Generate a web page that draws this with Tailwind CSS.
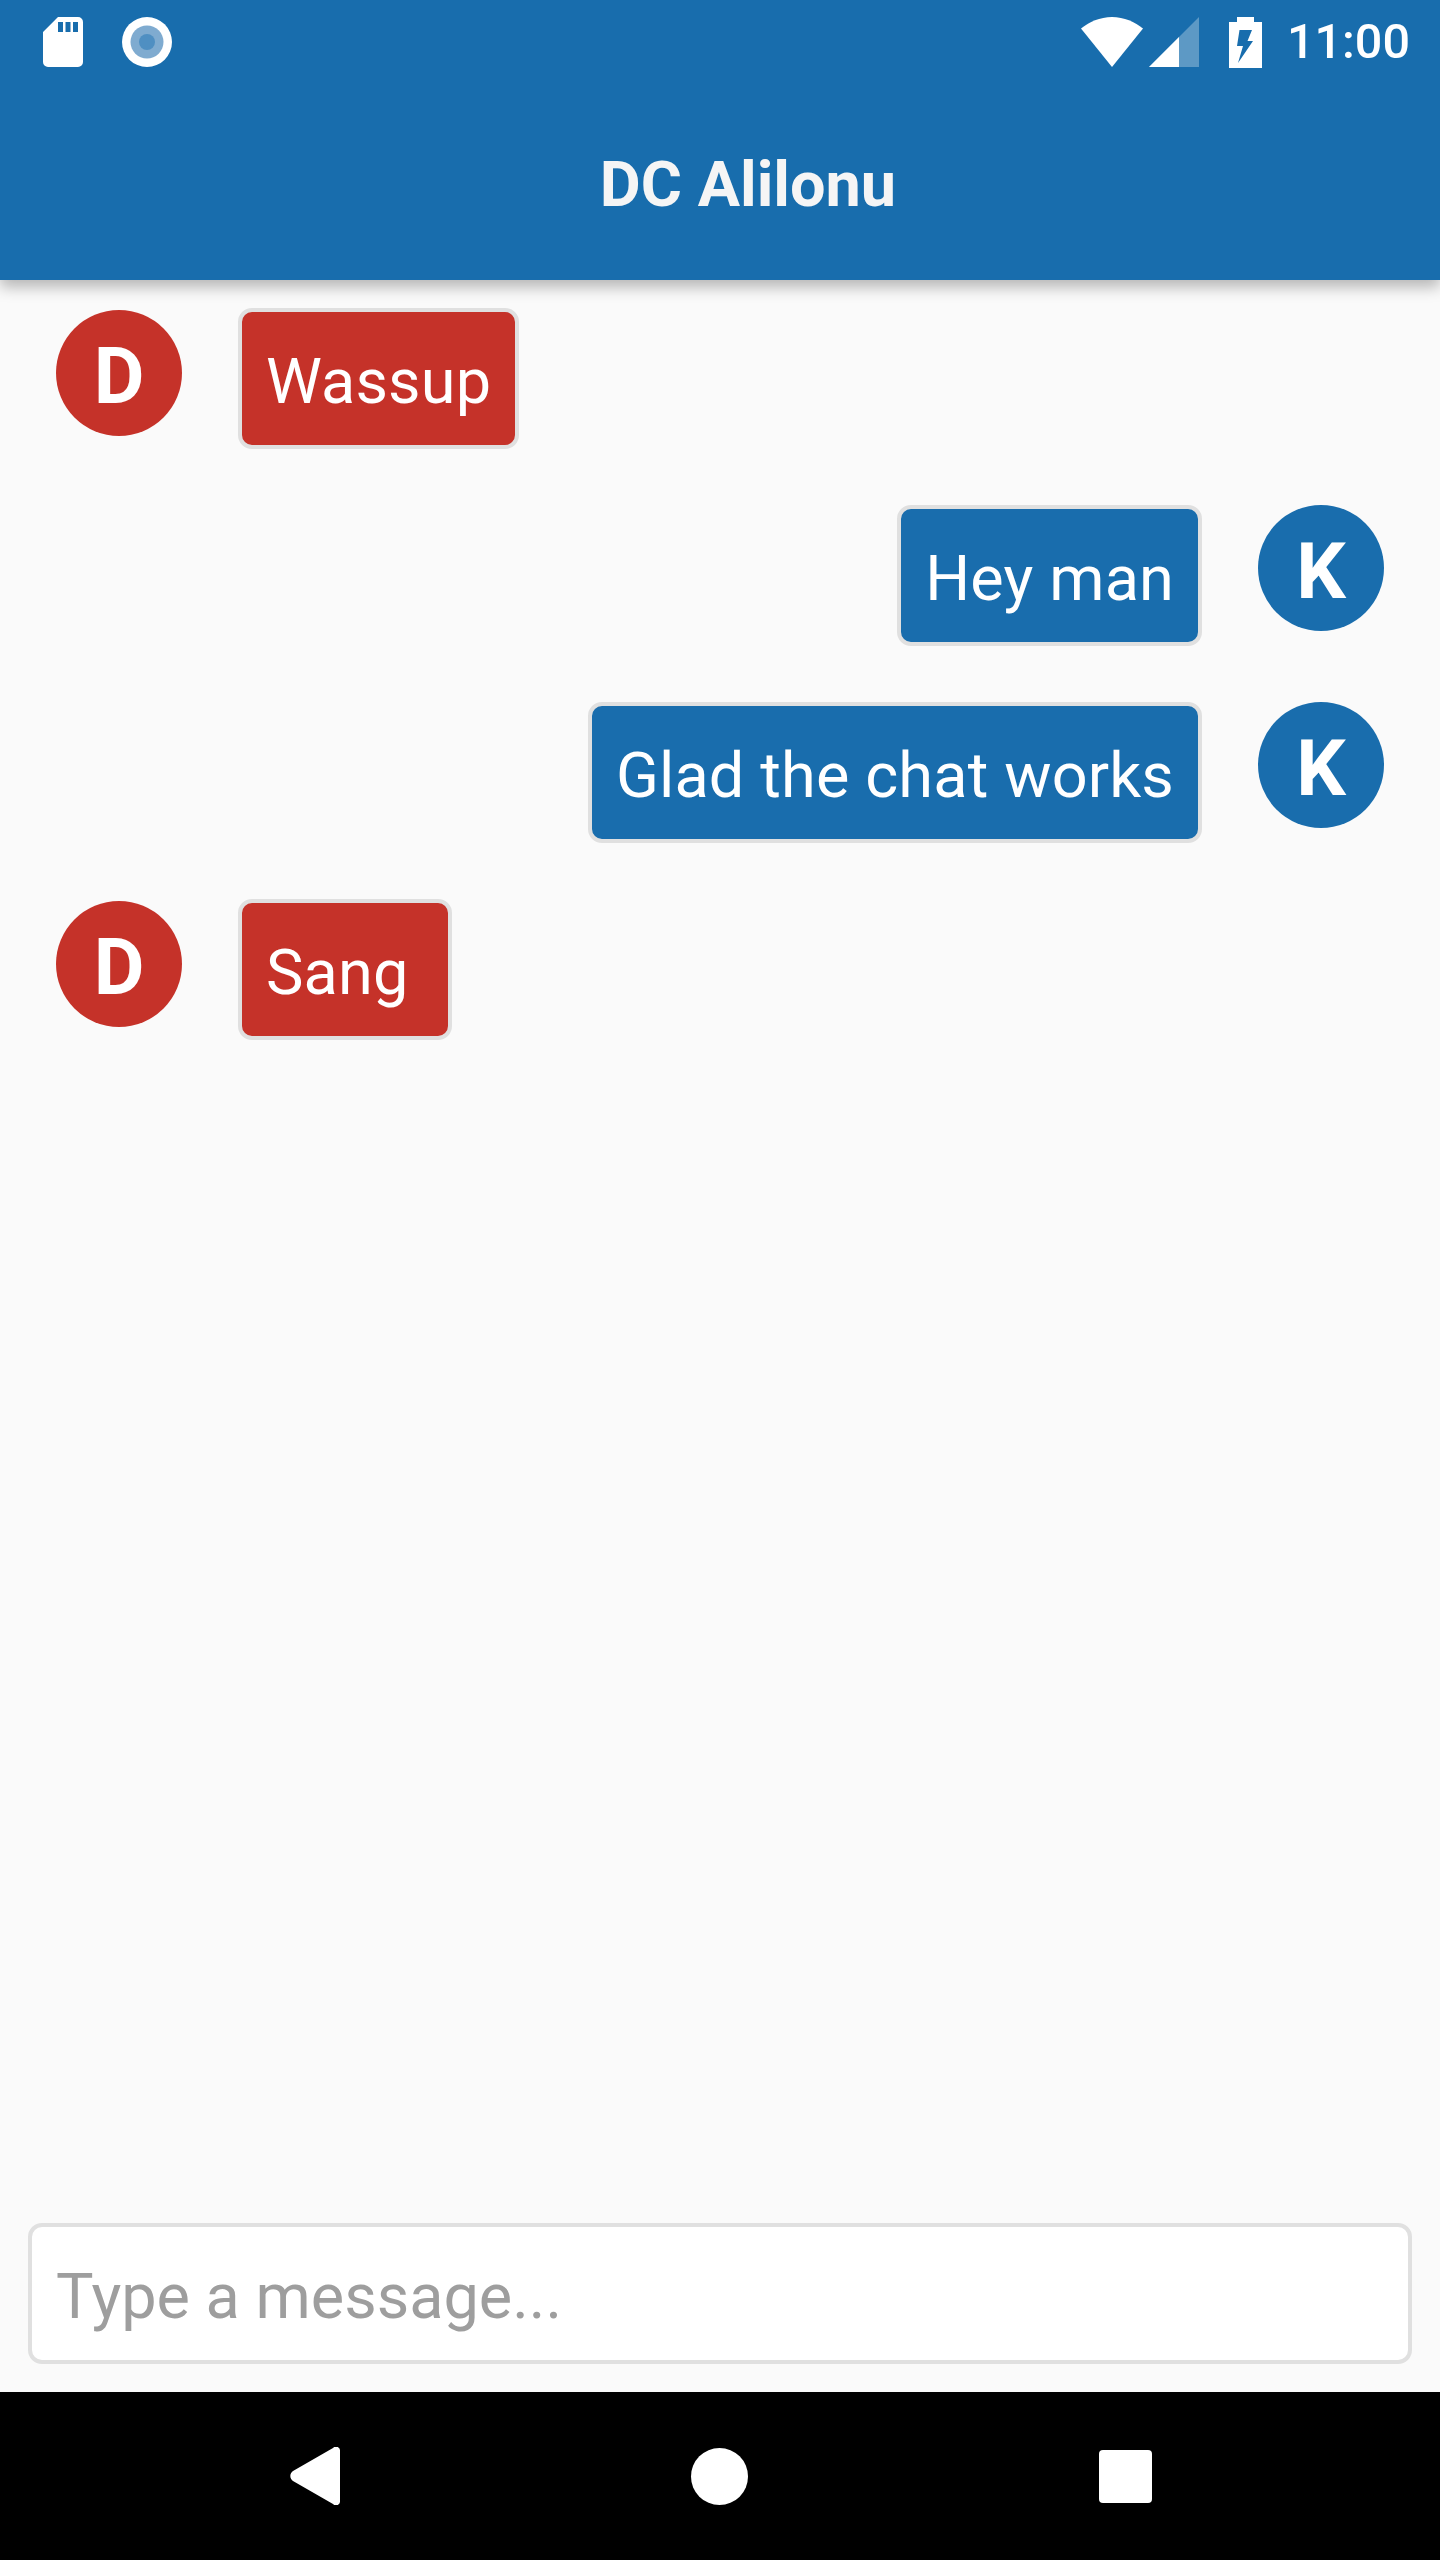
<!DOCTYPE html>
<html lang="en">
<head>
    <meta charset="UTF-8">
    <title>DC Alilonu</title>
    <script src="https://cdn.jsdelivr.net/npm/@tailwindcss/browser@4"></script>
</head>
<body class="bg-[#fafafa] font-['Roboto',sans-serif]">
    <div class="flex flex-col w-[1440px] h-[2560px]">
        <!-- header -->
        <header class="relative z-10 h-[280px] bg-[#186dad] text-white shadow-[0_7px_14px_rgba(0,0,0,0.28)]">
            <div class="flex items-center h-[84px] pl-[43px] pr-[30px]">
                <svg class="w-[40px] h-[50px]" viewBox="0 0 40 50"><path fill="#fff" fill-rule="evenodd" d="M15 0H35a5 5 0 0 1 5 5V45a5 5 0 0 1-5 5H5a5 5 0 0 1-5-5V15ZM15 5v10h5V5ZM22.500 5v10h5V5ZM30 5v10h5V5Z"/></svg>
                <svg class="w-[50px] h-[50px] ml-[39px]" viewBox="0 0 50 50"><circle cx="25" cy="25" r="25" fill="#fff"/><circle cx="25" cy="25" r="16.500" fill="#7fabd0"/><circle cx="25" cy="25" r="8" fill="#4f8fc2"/></svg>
                <svg class="w-[62px] h-[50px] ml-auto" viewBox="0 0 62 50"><path fill="#fff" d="M31 50 0 11.500C8 5 19 0 31 0S54 5 62 11.500Z"/></svg>
                <svg class="w-[50px] h-[50px] ml-[6px]" viewBox="0 0 50 50"><path fill="#fff" fill-opacity="0.3" d="M50 0V50H0Z"/><path fill="#fff" d="M30 20V50H0Z"/></svg>
                <svg class="w-[33px] h-[51px] ml-[30px]" viewBox="0 0 33 51"><path fill="#fff" fill-rule="evenodd" d="M8 0H25V5H33V51H0V5H8ZM10.500 13 8 29H14L9 46 24 24H18.500L23 13Z"/></svg>
                <span class="ml-[25px] text-[48.5px] leading-none font-medium">11:00</span>
            </div>
            <div class="flex justify-center items-center h-[196px] pl-[56px] pt-[4px]">
                <h1 class="text-[63px] font-bold leading-none text-[#f5f5f5]">DC Alilonu</h1>
            </div>
        </header>

        <!-- messages -->
        <main class="flex-1 flex flex-col gap-[56px] pt-[28px] px-[56px]">
            <div class="flex items-start gap-[56px]">
                <div class="flex items-center justify-center shrink-0 w-[126px] h-[126px] mt-[2px] pt-[6px] rounded-full bg-[#c53229] text-white text-[78px] font-bold">D</div>
                <div class="px-[24px] pt-[31px] pb-[25px] border-4 border-[#e0e0e0] rounded-[14px] bg-[#c53229] text-white text-[63px] leading-[77px] tracking-[0.15px]">Wassup</div>
            </div>
            <div class="flex items-start justify-end gap-[56px]">
                <div class="px-[24px] pt-[31px] pb-[25px] border-4 border-[#e0e0e0] rounded-[14px] bg-[#196dad] text-white text-[63px] leading-[77px] tracking-[0.15px]">Hey man</div>
                <div class="flex items-center justify-center shrink-0 w-[126px] h-[126px] pt-[6px] rounded-full bg-[#196dad] text-white text-[78px] font-bold">K</div>
            </div>
            <div class="flex items-start justify-end gap-[56px]">
                <div class="px-[24px] pt-[31px] pb-[25px] border-4 border-[#e0e0e0] rounded-[14px] bg-[#196dad] text-white text-[63px] leading-[77px] tracking-[0.15px]">Glad the chat works</div>
                <div class="flex items-center justify-center shrink-0 w-[126px] h-[126px] pt-[6px] rounded-full bg-[#196dad] text-white text-[78px] font-bold">K</div>
            </div>
            <div class="flex items-start gap-[56px]">
                <div class="flex items-center justify-center shrink-0 w-[126px] h-[126px] mt-[2px] pt-[6px] rounded-full bg-[#c53229] text-white text-[78px] font-bold">D</div>
                <div class="px-[24px] pt-[31px] pb-[25px] border-4 border-[#e0e0e0] rounded-[14px] bg-[#c53229] text-white text-[63px] leading-[77px] tracking-[0.15px] whitespace-pre">Sang </div>
            </div>
        </main>

        <!-- input -->
        <div class="px-[28px] pb-[28px]">
            <div class="px-[24px] pt-[31px] pb-[25px] border-4 border-[#e0e0e0] rounded-[14px] bg-white text-[#9e9e9e] text-[63px] leading-[77px]">Type a message...</div>
        </div>

        <!-- nav bar -->
        <nav class="relative h-[168px] bg-black shrink-0 flex items-center">
            <svg class="w-[50px] h-[58px] ml-[290px]" viewBox="0 0 50 58"><path fill="#fff" d="M3 24 43 1a4 4 0 0 1 7 3V54a4 4 0 0 1-7 3L3 34a6 6 0 0 1 0-10Z"/></svg>
            <div class="w-[57px] h-[57px] ml-[351px] rounded-full bg-white"></div>
            <div class="w-[53px] h-[53px] ml-[351px] rounded-[4px] bg-white"></div>
        </nav>
    </div>
</body>
</html>
